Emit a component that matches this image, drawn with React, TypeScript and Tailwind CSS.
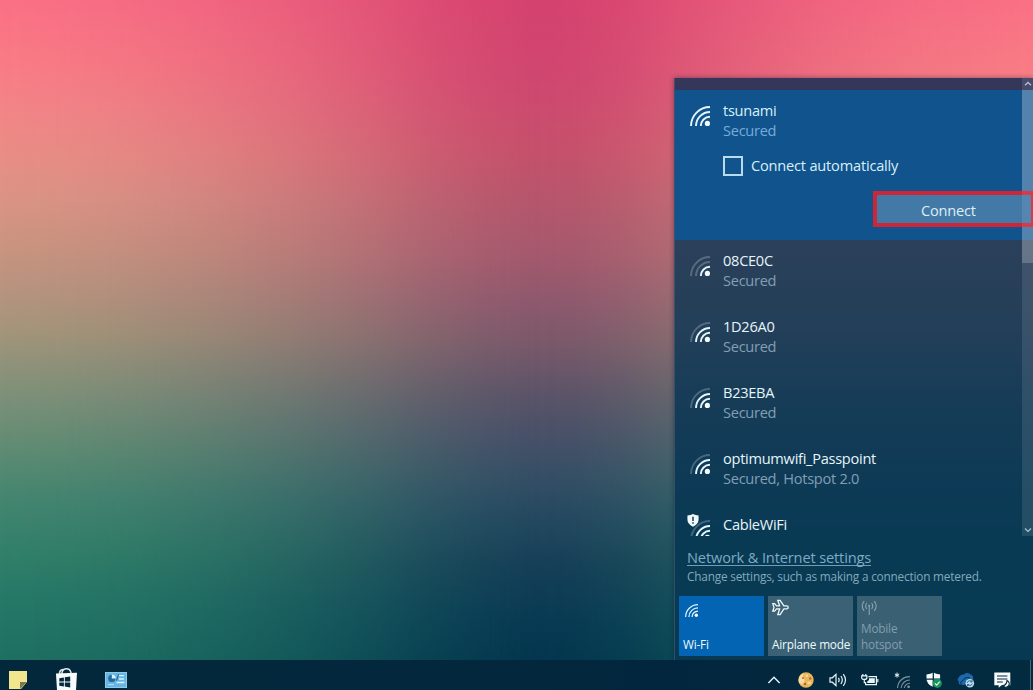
import React from 'react'

type Network = {
  name: string
  status?: string
  bars: number
  shield?: boolean
}

const networks: Network[] = [
  { name: '08CE0C', status: 'Secured', bars: 1 },
  { name: '1D26A0', status: 'Secured', bars: 2 },
  { name: 'B23EBA', status: 'Secured', bars: 2 },
  { name: 'optimumwifi_Passpoint', status: 'Secured, Hotspot 2.0', bars: 2 },
  { name: 'CableWiFi', bars: 2, shield: true },
]

const arcs = [
  { d: 'M10.8 20A9.2 9.2 0 0 1 20 10.8', level: 1 },
  { d: 'M6 20A14 14 0 0 1 20 6', level: 2 },
  { d: 'M1 20A19 19 0 0 1 20 1', level: 3 },
]

const WifiIcon: React.FC<{ bars: number; className?: string }> = ({ bars, className = 'size-5' }) => (
  <svg viewBox="0 0 20 20" fill="none" stroke="#e4f5fc" strokeWidth="1.9" className={className}>
    {arcs.map((arc) => (
      <path key={arc.level} d={arc.d} opacity={arc.level <= bars ? 1 : 0.25} />
    ))}
    <circle cx="17.4" cy="17.4" r="2.6" fill="#f4fcff" stroke="none" />
  </svg>
)

const ShieldAlert = () => (
  <svg viewBox="0 0 12 14" className="absolute -left-[3px] -top-[6px] h-[13px] w-3">
    <path d="M0 1.6Q3.6 1.6 6 0Q8.4 1.6 12 1.6V6Q12 11 6 13.6Q0 11 0 6Z" fill="#f2fafc" />
    <path d="M6 3v4.6M6 9v1.6" stroke="#123a57" strokeWidth="1.6" />
  </svg>
)

const NetworkRow: React.FC<{ network: Network }> = ({ network }) => (
  <div className="flex h-[66px] shrink-0 pl-[15px]">
    <div className="relative mt-4 size-5 shrink-0">
      <WifiIcon bars={network.bars} />
      {network.shield && <ShieldAlert />}
    </div>
    <div className="ml-[13px] mt-[10px] text-[14.6px] leading-5 tracking-[-0.28px]">
      <div className="text-[#e6f5f9]">{network.name}</div>
      {network.status && <div className="text-[#829fb5]">{network.status}</div>}
    </div>
  </div>
)

const SelectedNetwork = () => (
  <div className="h-[150px] shrink-0 bg-[#11538d] pl-[15px]">
    <div className="flex">
      <WifiIcon bars={3} className="mt-4 size-5" />
      <div className="ml-[13px] mt-[10px] text-[14.6px] leading-5 tracking-[-0.28px]">
        <div className="text-[#d7f0f8]">tsunami</div>
        <div className="text-[#76acd9]">Secured</div>
      </div>
    </div>
    <label className="ml-[33px] mt-4 flex h-5 items-center">
      <span className="size-5 border-2 border-[#b9dcec]" />
      <span className="ml-2 pb-[2px] text-[14.6px] leading-5 tracking-[-0.2px] text-[#d7f0f8]">Connect automatically</span>
    </label>
    <button className="ml-[183px] mt-[15px] flex h-9 w-[162px] items-center border-4 border-[#cd2638] bg-[#4379a6] pl-[44px] pt-[3px] text-[14.6px] tracking-[-0.2px] text-[#dceff7]">
      Connect
    </button>
  </div>
)

const Scrollbar = () => (
  <div className="absolute right-0 top-0 flex h-full w-[11px] flex-col items-center justify-between bg-white/10">
    <svg viewBox="0 0 11 12" className="h-3 w-[11px]" fill="none" stroke="#b5bdd5" strokeWidth="1.3">
      <path d="M3 7.2L6 4.4L9 7.2" />
    </svg>
    <div className="h-[101px] w-full bg-white/20" />
    <div className="h-9 w-full" />
    <div className="h-9 w-full bg-white/20" />
    <div className="grow" />
    <svg viewBox="0 0 11 12" className="h-3 w-[11px]" fill="none" stroke="#a5c3d0" strokeWidth="1.3">
      <path d="M3 4.6L6 7.4L9 4.6" />
    </svg>
  </div>
)

const AirplaneIcon = () => (
  <svg viewBox="0 0 17 17" className="h-[17px] w-[17px]" fill="none" stroke="#eefafc" strokeWidth="1.3" strokeLinejoin="miter">
    <path d="M.8 4.6h1.8l2 2.3h3L5.8 1.3h2.3l3.8 5.6h2.8a1.5 1.5 0 0 1 0 3h-2.8L8.1 15.7H5.8l1.8-5.8h-3l-2 2.3H.8L2 8.4Z" />
  </svg>
)

const HotspotIcon = () => (
  <svg viewBox="0 0 17 16" className="h-4 w-[17px]" fill="none" stroke="#8ba3b0" strokeWidth="1.1">
    <path d="M3.2 1.2Q-.8 6 3.2 10.8M5.8 3Q3.6 6 5.8 9M13.2 1.2Q17.2 6 13.2 10.8M10.6 3Q12.8 6 10.6 9M8.2 6.4V15" />
    <circle cx="8.2" cy="5.8" r="1.1" fill="#8ba3b0" stroke="none" />
  </svg>
)

const QuickActions = () => (
  <div className="ml-1 mt-[11px] flex gap-1 text-[11.8px] leading-4 tracking-[-0.2px] text-[#eefafc]">
    <div className="flex h-[60px] w-[85px] flex-col justify-between bg-[#0264b2] px-1 pb-1 pt-2">
      <WifiIcon bars={3} className="ml-[2px] size-[13px]" />
      <span>Wi-Fi</span>
    </div>
    <div className="flex h-[60px] w-[85px] flex-col justify-between bg-[#3a6175] px-1 pb-1 pt-[3px]">
      <AirplaneIcon />
      <span className="whitespace-nowrap">Airplane mode</span>
    </div>
    <div className="flex h-[60px] w-[85px] flex-col justify-between bg-[#3a6074] px-1 pb-1 pt-1 text-[#829dac]">
      <HotspotIcon />
      <span>
        Mobile
        <br />
        hotspot
      </span>
    </div>
  </div>
)

const NetworkFlyout = () => (
  <section className="flex h-[582px] w-[359px] flex-col border-l border-[#476074]/60 bg-[linear-gradient(180deg,#34365a_0%,#30395a_12%,#2b405a_29%,#233f59_43%,#163c57_56%,#0e3a56_68%,#083a54_80%,#073a52_100%)] shadow-[0_0_5px_rgba(20,20,50,0.45)]">
    <div className="relative flex h-[458px] flex-col overflow-hidden pt-3">
      <SelectedNetwork />
      {networks.map((network) => (
        <NetworkRow key={network.name} network={network} />
      ))}
      <Scrollbar />
    </div>
    <div className="pl-3 pt-[13px]">
      <a className="block w-fit border-b border-[#6f9db8] text-[14.6px] leading-[16px] tracking-[-0.14px] text-[#7eaac4]">
        Network &amp; Internet settings
      </a>
      <p className="mt-px whitespace-nowrap text-[11.8px] leading-[18px] tracking-[-0.19px] text-[#83a9ba]">
        Change settings, such as making a connection metered.
      </p>
    </div>
    <QuickActions />
  </section>
)

const Taskbar = () => (
  <footer className="flex h-[30px] justify-between bg-[linear-gradient(90deg,#04283b_0%,#03283d_40%,#02263d_65%,#032b40_100%)]">
    <div className="flex">
      <div className="flex w-[42px] pl-[9px] pt-[11px]">
        {/* sticky notes */}
        <svg viewBox="0 0 18 18" className="size-[18px]">
          <path d="M0 0h18v11l-6 7H0Z" fill="#f1e58d" />
          <path d="M18 11h-7v7Z" fill="#7b7851" />
        </svg>
      </div>
      <div className="flex w-12 pl-[14px] pt-2">
        {/* store */}
        <svg viewBox="0 0 21 22" className="h-[22px] w-[21px]">
          <path d="M3.6 6V4.5Q4 1.6 7.5 1.6M6 6V4.4Q7 .8 10.5.8T15 4.6V6" fill="none" stroke="#dcebf0" strokeWidth="1.5" />
          <path d="M0 5.6L21 4.8L20 22H1Z" fill="#f7fcfd" />
          <path d="M3.3 10.2l4.6-.7v4H3.3ZM8.8 9.3l5.4-.8v5H8.8ZM3.3 14.5h4.6v4l-4.6-.7ZM8.8 14.5h5.4v4.9l-5.4-.8Z" fill="#06283c" />
        </svg>
      </div>
      <div className="flex w-13 pl-[15px] pt-3">
        {/* control panel */}
        <svg viewBox="0 0 22 16" className="h-4 w-[22px]">
          <rect x=".5" y=".5" width="21" height="15" fill="#67b5e3" stroke="#8ccbeb" />
          <circle cx="6.8" cy="6.4" r="3.6" fill="#256c9e" />
          <path d="M6.8 6.4V2.4A4 4 0 0 1 10.8 6.4Z" fill="#d9f1fc" />
          <path d="M14 3.6h5M14 7h5M11.5 10.5h8" stroke="#d9f1fc" strokeWidth="1.3" />
          <path d="M13.6 2.4L11.4 8.6" stroke="#256c9e" strokeWidth="1.2" />
          <path d="M3 12.6h6" stroke="#b9e2f5" />
        </svg>
      </div>
    </div>
    <div className="flex pt-[10px]">
      <div className="flex h-5 w-8 items-center justify-center">
        <svg viewBox="0 0 14 8" className="h-2 w-[14px]" fill="none" stroke="#e7f4f8" strokeWidth="1.4">
          <path d="M1.4 7L7 1.3L12.6 7" />
        </svg>
      </div>
      <div className="flex h-5 w-8 items-center justify-center">
        {/* paint palette */}
        <svg viewBox="0 0 16 16" className="size-4">
          <circle cx="8" cy="8" r="7.7" fill="#e9b55e" />
          <path d="M1 10.5A7.4 7.4 0 0 1 6 1.2Q4 5 6 7T4 12.5Z" fill="#f5dda4" />
          <circle cx="8.8" cy="3.8" r="1.3" fill="#f7e27a" />
          <circle cx="12.2" cy="6.5" r="1.2" fill="#cd5b35" />
          <circle cx="5" cy="6" r="1.1" fill="#d0742f" />
          <circle cx="7" cy="12" r="1.2" fill="#b8622e" />
          <ellipse cx="11.2" cy="10.9" rx="2" ry="1.4" fill="#f8dc86" />
        </svg>
      </div>
      <div className="flex h-5 w-8 items-center justify-center">
        <svg viewBox="0 0 18 14" className="h-[14px] w-[18px]" fill="none" stroke="#e7f4f8" strokeWidth="1.2">
          <path d="M1 4.8h2.3L7 1.4v11.2L3.3 9.2H1Z" />
          <path d="M9.4 4.8q1.5 2.2 0 4.4M11.9 3q2.8 4 0 8M14.3 1.2q4.4 5.8 0 11.6" />
        </svg>
      </div>
      <div className="flex h-5 w-8 items-center justify-center">
        {/* battery with plug */}
        <svg viewBox="0 0 18 14" className="h-[14px] w-[18px]" fill="none" stroke="#e7f4f8" strokeWidth="1.2">
          <path d="M7.4 3.6h8v8H4.6V9M16.8 6v3.2" />
          <path d="M8 5.2h5.8v4.8H6.2V8.4L8 7Z" fill="#e7f4f8" stroke="none" />
          <path d="M1.8 1v1.8M4.8 1v1.8M.7 2.9h5.2v1.8q0 1.7-2.6 1.7T.7 4.7ZM3.3 6.4v3.2h1.3" />
        </svg>
      </div>
      <div className="flex h-5 w-8 items-center justify-center">
        <svg viewBox="0 0 17 17" className="h-[17px] w-[17px]" fill="none" stroke="#7c909d" strokeWidth="1.1">
          <path d="M3.5 16A12 12 0 0 1 16 4.6M7 16A9 9 0 0 1 16 8M10.3 16A6 6 0 0 1 16 11.2" />
          <circle cx="14.6" cy="14.8" r="1.4" fill="#7c909d" stroke="none" />
          <path d="M3 .6v5M.8 1.9l4.4 2.5M5.2 1.9L.8 4.4" stroke="#e7f4f8" strokeWidth="1" />
        </svg>
      </div>
      <div className="flex h-5 w-8 items-center justify-center">
        {/* defender */}
        <svg viewBox="0 0 16 16" className="size-4">
          <path d="M.5 2.4Q4.8 2.4 7.3.6Q9.8 2.4 14.1 2.4V7Q14 12 7.3 15Q.6 12 .5 7Z" fill="#f5fbfc" />
          <path d="M7.3 0v15M0 7.1h15" stroke="#0b2c3d" strokeWidth="1.3" />
          <circle cx="11.3" cy="11.3" r="4.6" fill="#17945d" />
          <path d="M8.9 11.3l1.8 1.8l3-3.5" stroke="#dff8e9" strokeWidth="1.2" fill="none" />
        </svg>
      </div>
      <div className="flex h-5 w-8 items-center justify-center">
        {/* cloud sync */}
        <svg viewBox="0 0 18 16" className="h-4 w-[18px]">
          <path d="M1 6.5Q3 2.2 7 2.4Q10-.4 13.5 2.5Q17 3.4 16 8L7 13H4Q1 12.4 1.8 9.2Q0 8.3 1 6.5Z" fill="#1c69ad" />
          <path d="M4.4 13Q2.5 9.5 6.4 8.1Q8 4.3 12.6 6" fill="none" stroke="#06304b" strokeWidth="1" />
          <circle cx="12.8" cy="11.2" r="4.3" fill="#c3dfec" />
          <path d="M10 10.9q.8-2.4 3.2-2.2l1.7 1.1M15.4 11.5q-.8 2.4-3.2 2.2l-1.7-1.1M15 8v2h-1.8M10.5 14.4v-2h1.8" fill="none" stroke="#185f94" strokeWidth=".9" />
        </svg>
      </div>
      <div className="flex h-5 w-10 items-center justify-center">
        {/* action center, quiet hours */}
        <svg viewBox="0 0 17 16" className="h-4 w-[17px]">
          <path d="M.3.5h16v12.7H7.5L4.7 15.8v-2.6H.3Z" fill="#f6fbfc" />
          <path d="M3 4h10.4M3 7h10.4M3 10h5.8" stroke="#05273b" strokeWidth="1.2" />
          <path d="M13 8.6a3.4 3.4 0 1 1-4 5Q12.6 13 13 8.6Z" fill="#f6fbfc" stroke="#05273b" strokeWidth="1.1" />
        </svg>
      </div>
      <div className="-mt-[10px] ml-2 h-[30px] w-[3px] border-l border-[#49677a]" />
    </div>
  </footer>
)

// The wallpaper is a warm-to-green base with a cooler column blended over its middle.
const App: React.FC = () => (
  <div className="relative h-[690px] w-[1033px] overflow-hidden bg-[linear-gradient(180deg,#fa7086_0%,#f97b85_9%,#f28587_16%,#e88e86_23%,#da9486_29%,#c99480_36%,#b4947e_43%,#a4957a_48%,#93937a_52%,#7b9078_58%,#5f8c73_65%,#458670_72%,#328069_80%,#267867_87%,#1e7062_96%)] font-['Open_Sans','Noto_Sans',sans-serif]">
    <div className="absolute inset-0 bg-[linear-gradient(180deg,#d5426f_0%,#cf476f_12%,#c5506b_22%,#b3566c_30%,#a4586d_37%,#90586d_43%,#78586a_50%,#5c5368_57%,#485068_63%,#354e65_69%,#244860_75%,#153f57_82%,#083a53_90%,#03364e_96%)] [mask-image:linear-gradient(90deg,transparent_0px,rgba(0,0,0,0.03)_60px,rgba(0,0,0,0.1)_130px,rgba(0,0,0,0.23)_210px,rgba(0,0,0,0.4)_290px,rgba(0,0,0,0.61)_370px,rgba(0,0,0,0.8)_430px,rgba(0,0,0,0.93)_485px,#000_535px,rgba(0,0,0,0.98)_575px,rgba(0,0,0,0.87)_625px,rgba(0,0,0,0.7)_675px,rgba(0,0,0,0.5)_740px,rgba(0,0,0,0.28)_820px,rgba(0,0,0,0.1)_920px,transparent_1033px)]" />
    <div className="relative flex h-full flex-col">
      <main className="flex h-[660px] items-end justify-end">
        <NetworkFlyout />
      </main>
      <Taskbar />
    </div>
  </div>
)

export default App
